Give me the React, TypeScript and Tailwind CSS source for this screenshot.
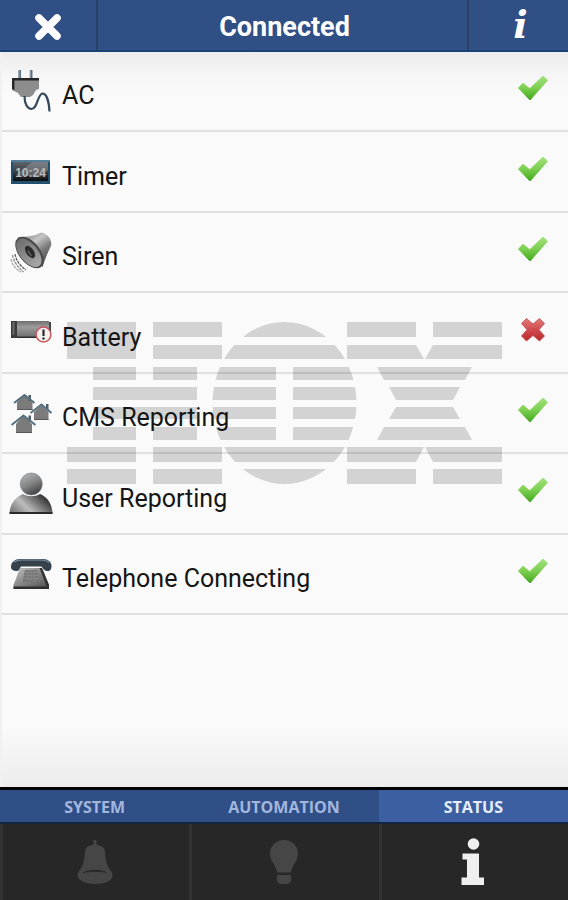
import React from 'react'
import { clsx } from 'clsx'

// ==================================================
// ROW ICONS
// ==================================================

const iconProps = {
  viewBox: '0 0 44 44',
  className: 'h-11 w-11 shrink-0 overflow-visible',
  'aria-hidden': true
}

function PlugIcon() {
  return (
    <svg {...iconProps}>
      <path d="M11.5 1v9M23 1v9" stroke="#8494a0" strokeWidth="2.6" />
      <path d="M12.3 1v9M23.8 1v9" stroke="#4c6478" strokeWidth="1" />
      <path d="M4 9h27v11l-3 1-3 5-3 2H13l-3-4-6-3z" fill="#8d8d8d" />
      <path d="M4 9h27v2.4H6.4V21L4 20z" fill="#262626" />
      <path d="M16.5 27c0 8 3 13 7 13 6 0 6-15 11-15.500 4 0 6.500 8 7 18" fill="none" stroke="#34495c" strokeWidth="2.2" />
    </svg>
  )
}

function TimerIcon() {
  return (
    <svg {...iconProps}>
      <defs>
        <linearGradient id="timer" x1="0" y1="0" x2="0" y2="1">
          <stop offset="0" stopColor="#5c646a" />
          <stop offset="0.5" stopColor="#3c4044" />
          <stop offset="1" stopColor="#0b0d10" />
        </linearGradient>
      </defs>
      <rect x="3" y="10" width="39" height="24" fill="#24506f" />
      <rect x="3" y="10" width="39" height="2" fill="#55809c" />
      <rect x="5" y="12" width="35" height="19" fill="url(#timer)" />
      <path d="M8 25 24 12h16v8L32 27z" fill="#9b9fa2" opacity="0.45" />
      <text x="22.500" y="27" textAnchor="middle" fontFamily="Liberation Sans" fontWeight="bold" fontSize="12" fill="#b9b9b9">
        10:24
      </text>
    </svg>
  )
}

function SirenIcon() {
  return (
    <svg {...iconProps}>
      <defs>
        <linearGradient id="horn" x1="0.300" y1="0" x2="0.900" y2="0.900">
          <stop offset="0" stopColor="#8b8b8b" />
          <stop offset="0.300" stopColor="#c6c6c6" />
          <stop offset="0.600" stopColor="#7b7b7b" />
          <stop offset="1" stopColor="#4b4b4b" />
        </linearGradient>
        <linearGradient id="mouth" x1="0" y1="0" x2="1" y2="0">
          <stop offset="0" stopColor="#6d6d6d" />
          <stop offset="1" stopColor="#a9a9a9" />
        </linearGradient>
      </defs>
      <path d="M10 7C18 7 27 6 32 3c5-2 13 6 11 13-3 6-6 13-8.500 21z" fill="url(#horn)" />
      <ellipse cx="21.500" cy="22.500" rx="18.500" ry="10.500" transform="rotate(51 21.500 22.500)" fill="#4b4b4b" />
      <ellipse cx="20.800" cy="22.800" rx="16.800" ry="9" transform="rotate(51 20.800 22.800)" fill="url(#mouth)" />
      <ellipse cx="22" cy="22" rx="7" ry="3.800" transform="rotate(55 22 22)" fill="#2b2b2b" />
      <path d="M19.500 20.500l4 5.500" stroke="#5d5d5d" strokeWidth="1.500" />
      <g fill="none" strokeWidth="1.300">
        <path d="M7 24c1 6 5 12 11 16" stroke="#5c5c5c" strokeDasharray="3 0.800" />
        <path d="M4.500 25c1 6 5 12 11 17" stroke="#8a8a8a" strokeDasharray="3 0.800" />
        <path d="M3 29c1 5 4 10 10 13" stroke="#a8a8a8" strokeDasharray="3 0.800" />
      </g>
    </svg>
  )
}

function BatteryIcon() {
  return (
    <svg {...iconProps}>
      <defs>
        <linearGradient id="cell" x1="0" y1="0" x2="0" y2="1">
          <stop offset="0" stopColor="#6f6f6f" />
          <stop offset="0.350" stopColor="#9c9c9c" />
          <stop offset="0.850" stopColor="#777777" />
          <stop offset="1" stopColor="#1c1c1c" />
        </linearGradient>
      </defs>
      <rect x="40" y="12" width="3" height="10" fill="#444444" />
      <rect x="3" y="11" width="38" height="17" fill="url(#cell)" />
      <rect x="3" y="11" width="6" height="17" fill="#3b3b3b" />
      <rect x="4.500" y="12" width="2" height="13" fill="#6a6a6a" />
      <circle cx="35.500" cy="24.500" r="7.400" fill="#f6f1f1" stroke="#c9565a" strokeWidth="1.500" />
      <path d="M35.500 19.500v6.500" stroke="#2b2b2b" strokeWidth="2.200" />
      <circle cx="35.500" cy="28.500" r="1.200" fill="#2b2b2b" />
    </svg>
  )
}

function HousesIcon() {
  return (
    <svg {...iconProps}>
      <g fill="#7b7b7b">
        <path d="M9 19v-8l7.500-7 8 7v8zM26 29v-8l7.500-7 7 7v8zM8 42v-9l7.500-8.500L24 33v9z" />
      </g>
      <path d="M20.500 4H23v6h-2.500zM38 13h2.500v6H38zM20.500 24.500H23v6h-2.500z" fill="#4f5d66" />
      <g fill="none" stroke="#54707f" strokeWidth="2">
        <path d="M6 12 16.500 4l10 8" />
        <path d="M22.500 22l11-8.500 10 8.500" />
        <path d="M3.500 34 15.500 24.500 27.500 34" />
      </g>
      <path d="M9 18.500h15.500M26 28.500h14.500M8 41.500h16" stroke="#575757" strokeWidth="1.200" />
    </svg>
  )
}

function UserIcon() {
  return (
    <svg {...iconProps}>
      <defs>
        <linearGradient id="person" x1="0.200" y1="0" x2="0.700" y2="1">
          <stop offset="0" stopColor="#b5b5b5" />
          <stop offset="0.500" stopColor="#858585" />
          <stop offset="1" stopColor="#3d3d3d" />
        </linearGradient>
        <linearGradient id="torso" x1="0" y1="1" x2="1" y2="0.500">
          <stop offset="0" stopColor="#6a6a6a" />
          <stop offset="0.450" stopColor="#bcbcbc" />
          <stop offset="1" stopColor="#333333" />
        </linearGradient>
      </defs>
      <path d="M1.500 42.500C2 32 8 26 15 23c5 3 12 3 17 0 7 3 12 9 12.500 19.500z" fill="url(#torso)" />
      <path d="M1.500 41h43v2h-43z" fill="#2b2b2b" />
      <circle cx="23.300" cy="13" r="11" fill="url(#person)" stroke="#6f7b84" strokeWidth="0.600" />
    </svg>
  )
}

function PhoneIcon() {
  return (
    <svg {...iconProps}>
      <defs>
        <linearGradient id="phone" x1="0" y1="0" x2="1" y2="1">
          <stop offset="0" stopColor="#c2c2c2" />
          <stop offset="0.500" stopColor="#858585" />
          <stop offset="1" stopColor="#4b4b4b" />
        </linearGradient>
      </defs>
      <path d="M12 16h22l7 17v3.500H5.500V33z" fill="url(#phone)" />
      <path d="M5.500 34.500h35.500v2.500H5.500z" fill="#2f2f2f" />
      <path d="M31.500 16H34l7 17v3.500h-1.500z" fill="#333333" />
      <path d="M17 18h12l3 12H14.500z" fill="#777777" />
      <path d="M17 20.500h13M16.500 23.500h14M16 26.500h15M20 18v11M23 18v11M26.500 18v11" stroke="#8d8d8d" strokeWidth="0.700" />
      <path d="M3 15c0-5 4-8 9-8h23c5 0 8.500 3 8.500 7 0 3-1 5-4 5-3 0-4-2-6-4.500H13c-2 2.500-2 4.500-4 4.500-3 0-6-1-6-4z" fill="#36414b" />
      <path d="M6 10C9 8 12 8 14 8h19c3 0 6 .5 8 2.500" fill="none" stroke="#7d96a6" strokeWidth="1.200" />
    </svg>
  )
}

// ==================================================
// STATUS MARKS
// ==================================================

function CheckMark() {
  return (
    <svg viewBox="0 0 32 32" className="h-8 w-8 shrink-0" role="img" aria-label="OK">
      <defs>
        <linearGradient id="check" x1="0" y1="0" x2="0" y2="1">
          <stop offset="0" stopColor="#a4e17e" />
          <stop offset="0.500" stopColor="#7ccf50" />
          <stop offset="1" stopColor="#42a81c" />
        </linearGradient>
      </defs>
      <path
        d="M2.500 13 7 8.200l6.700 5.600L27 1l4.500 4.200L14 25z"
        fill="url(#check)"
        stroke="url(#check)"
        strokeWidth="1"
        strokeLinejoin="round"
      />
    </svg>
  )
}

function CrossMark() {
  return (
    <svg viewBox="0 0 32 32" className="h-8 w-8 shrink-0" role="img" aria-label="Fault">
      <defs>
        <linearGradient id="cross" x1="0" y1="0" x2="0" y2="1">
          <stop offset="0" stopColor="#e07b7c" />
          <stop offset="0.500" stopColor="#cf4b4d" />
          <stop offset="1" stopColor="#b9282c" />
        </linearGradient>
      </defs>
      <path
        d="M10.500 2.500 17 8l6.500-5.500 5 5L23 13.700l5.500 6.300-5 5L17 19.500 10.500 25l-5-5 5.500-6.300-5.500-6.200z"
        fill="url(#cross)"
        stroke="#c34547"
        strokeWidth="0.800"
        strokeLinejoin="round"
      />
    </svg>
  )
}

// ==================================================
// WATERMARK
// Striped logo behind the list
// ==================================================

function Watermark() {
  return (
    <svg viewBox="0 0 438 162" className="h-[162px] w-[438px]" fill="#d3d3d3" aria-hidden="true">
      <defs>
        <clipPath id="ring">
          <ellipse cx="218.500" cy="81" rx="72" ry="81" />
        </clipPath>
      </defs>
      <path d="M1 0h69v37H1zM1 125h69v15H1zM1 147h69v15H1z" />
      <path d="M87 0h69v15H87zM87 23h69v14H87zM87 125h69v15H87zM87 147h69v15H87z" />
      <path d="M27 45h43v13H27zM87 45h44v13H87zM27 65h104v13H27zM27 85h104v12H27zM27 105h43v13H27zM87 105h44v13H87z" />
      <g clipPath="url(#ring)">
        <path d="M140 0h160v15H140zM140 23h160v14H140zM140 125h160v15H140zM140 147h160v15H140z" />
        <path d="M140 45h70v13h-70zM140 65h70v13h-70zM140 85h70v12h-70zM140 105h70v13h-70z" />
        <path d="M227 45h70v13h-70zM227 65h70v13h-70zM227 85h70v12h-70zM227 105h70v13h-70z" />
      </g>
      <path d="M281 0h69v15h-69zM367 0h69v15h-69zM281 147h69v15h-69zM367 147h69v15h-69z" />
      <path d="M281 23h69l8 14h-77zM367 23h69v14h-77zM281 125h77l-8 15h-69zM359 125h77v15h-69z" />
      <path d="M311 45h95l-7 13h-81zM323 65h71l-7 13h-57zM330 85h57l7 12h-71zM318 105h81l7 13h-95z" />
    </svg>
  )
}

// ==================================================
// TAB ICONS
// ==================================================

function BellIcon() {
  return (
    <svg viewBox="0 0 36 44" className="h-11 w-9" aria-hidden="true">
      <path
        d="M16.500 0h3v4.500c5 1 8 2.500 8.500 7 .6 8 1.500 13 4.500 17.500 2 2.500 3 4 3 6.500 0 5-8 8.500-17.500 8.500S.5 40 .5 35.500c0-2.500 1-4 3-6.500C6.500 24.500 7.400 19.500 8 11.500c.5-4.500 3.500-6 8.500-7z"
        fill="#464646"
      />
      <path d="M5.500 33.500C8 28.500 28 28.500 30.500 33.500 27 31.500 9 31.500 5.500 33.500z" fill="#2a2a2a" />
    </svg>
  )
}

function BulbIcon() {
  return (
    <svg viewBox="0 0 28 44" className="h-11 w-7" fill="#464646" aria-hidden="true">
      <path d="M14 0C22 0 28 6 28 13.500c0 8-6 11-7 19H7c-1-8-7-11-7-19C0 6 6 0 14 0z" />
      <path d="M7 35h14v5c0 2-2 4-4 4h-6c-2 0-4-2-4-4z" />
    </svg>
  )
}

function StatusIcon() {
  return (
    <svg viewBox="0 0 24 48" className="h-12 w-6" fill="#efefef" aria-hidden="true">
      <circle cx="12.500" cy="6" r="5.800" />
      <path d="M1.500 15.500H18V39.500h5V47H.5v-7.500H6V21.500H1.500z" />
    </svg>
  )
}

// ==================================================
// SCREEN
// ==================================================

const ITEMS = [
  { label: 'AC', icon: <PlugIcon />, ok: true },
  { label: 'Timer', icon: <TimerIcon />, ok: true },
  { label: 'Siren', icon: <SirenIcon />, ok: true },
  { label: 'Battery', icon: <BatteryIcon />, ok: false },
  { label: 'CMS Reporting', icon: <HousesIcon />, ok: true },
  { label: 'User Reporting', icon: <UserIcon />, ok: true },
  { label: 'Telephone Connecting', icon: <PhoneIcon />, ok: true }
]

const TABS = [
  { label: 'SYSTEM', icon: <BellIcon />, active: false },
  { label: 'AUTOMATION', icon: <BulbIcon />, active: false },
  { label: 'STATUS', icon: <StatusIcon />, active: true }
]

export default function App() {
  return (
    <div className="flex min-h-screen flex-col bg-[#fafafa] font-[Roboto,sans-serif]">
      <header className="flex h-[52px] border-b-2 border-[#1e4079] bg-[#304f85] text-white">
        <button
          type="button"
          aria-label="Close"
          className="flex w-[98px] items-center justify-center border-r-2 border-[#2a4166] pt-1"
        >
          <svg viewBox="0 0 28 28" className="h-7 w-7" aria-hidden="true">
            <path d="M5 5l18 18M23 5L5 23" stroke="#ffffff" strokeWidth="7.500" strokeLinecap="round" />
          </svg>
        </button>
        <h1 className="flex flex-1 items-center justify-center pt-1 pl-1 text-[27px] font-bold">Connected</h1>
        <button
          type="button"
          aria-label="Info"
          className="flex w-[101px] items-center justify-center border-l-2 border-[#2a4166] pl-1 font-['DejaVu_Serif',serif] text-[38px] leading-none font-bold italic"
        >
          i
        </button>
      </header>

      <main className="relative flex-1 border-l-2 border-[#f1f1f1] bg-[linear-gradient(to_bottom,#ececec_0,#f6f6f6_24px,#fafafa_44px,#fafafa_calc(100%-60px),#ececec_100%)]">
        <div className="absolute inset-x-0 top-[270px] flex justify-center">
          <Watermark />
        </div>
        <ul className="relative flex h-[563px] flex-col">
          {ITEMS.map(item => (
            <li key={item.label} className="flex flex-1 items-center gap-2.5 border-b-2 border-black/10 pr-5 pl-1.5">
              {item.icon}
              <span className="flex-1 pt-2.5 text-[25px] text-[#151515]">{item.label}</span>
              {item.ok ? <CheckMark /> : <CrossMark />}
            </li>
          ))}
        </ul>
      </main>

      <nav className="grid grid-cols-3 border-t-3 border-black bg-[#272727]">
        {TABS.map(tab => (
          <button
            key={tab.label}
            type="button"
            aria-current={tab.active ? 'page' : undefined}
            className="flex flex-col"
          >
            <span
              className={clsx(
                "flex h-[34px] w-full items-center justify-center border-b-2 border-[#14233f] pt-0.5 font-['Open_Sans',sans-serif] text-base font-bold",
                tab.active ? 'bg-[#3c5fa2] text-[#e6edfa]' : 'bg-[#304f87] text-[#a3b7dd]'
              )}
            >
              {tab.label}
            </span>
            <span className="flex h-[76px] w-full items-center justify-center shadow-[inset_3px_0_#333333]">
              {tab.icon}
            </span>
          </button>
        ))}
      </nav>
    </div>
  )
}
